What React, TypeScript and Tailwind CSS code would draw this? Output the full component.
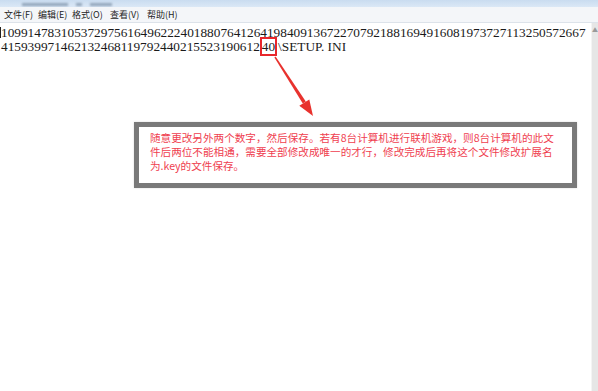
import React from "react";

const menus = [
  { label: "文件(F)", w: "w-[34px]" },
  { label: "编辑(E)", w: "w-[34px]" },
  { label: "格式(O)", w: "w-[38px]" },
  { label: "查看(V)", w: "w-[37px]" },
  { label: "帮助(H)", w: "w-[37px]" },
];

export default function App() {
  return (
    <div
      className="relative w-[598px] h-[391px] overflow-hidden bg-white flex flex-col"
      style={{ fontFamily: '"Noto Sans CJK SC", "Noto Sans", sans-serif' }}
    >
      {/* title bar (cut off) */}
      <div className="h-[7px] bg-gradient-to-b from-[#c9dcf0] to-[#dbe8f6] flex items-end pl-[22px] gap-[8px] pb-[1px] overflow-hidden">
        <div className="w-[46px] h-[3px] bg-[#93a6bb] blur-[1px]" />
        <div className="w-[6px] h-[3px] bg-[#93a6bb] blur-[1px]" />
        <div className="w-[22px] h-[3px] bg-[#93a6bb] blur-[1px]" />
      </div>
      {/* menu bar */}
      <div className="h-[16px] bg-[#f4f6f9] border-b border-[#dde3ea] flex items-center pl-[4px] text-[9px] leading-[16px] text-[#1e1e1e]">
        {menus.map((m) => (
          <span key={m.label} className={`${m.w} whitespace-nowrap`}>
            {m.label}
          </span>
        ))}
      </div>
      {/* editor */}
      <div className="flex-1 flex">
        <div
          className="flex-1 pt-[3px] pl-[1px] text-[13.3px] leading-[13.5px] text-[#1a1a1a] whitespace-nowrap overflow-hidden"
          style={{ fontFamily: '"Liberation Serif", "Noto Sans CJK SC", serif' }}
        >
          <div className="relative">
            <span className="absolute left-[-1px] top-[1px] w-[1px] h-[11px] bg-[#222]" />
            1099147831053729756164962224018807641264198409136722707921881694916081973727113250572667
          </div>
          <div>
            415939971462132468119792440215523190612
            <span className="outline outline-2 outline-[#e8262b] ml-[2px]">40</span>
            <span className="ml-[3px]">\SETUP. INI</span>
          </div>
        </div>
        {/* scrollbar */}
        <div className="w-[7px] bg-[#e6e6e6] border-l border-[#f4f4f4] flex flex-col items-center pt-[4px]">
          <span className="text-[6px] leading-[6px] text-[#9a9a9a]">▲</span>
        </div>
      </div>

      {/* annotation arrow */}
      <svg
        className="absolute left-0 top-0 pointer-events-none"
        width="598"
        height="391"
        viewBox="0 0 598 391"
      >
        <polygon points="275.6,56.6 274.4,57.4 302.8,103.6 305.8,101.6" fill="#e8322e" />
        <polygon points="313,116 309.3,99.4 299.3,105.8" fill="#e8322e" />
      </svg>

      {/* annotation box */}
      <div className="absolute left-[134px] top-[122px] w-[443px] h-[66px] border-[5px] border-[#797979] bg-white shadow-[0_0_2px_rgba(0,0,0,0.15)] pl-[11px] pt-[4px] text-[10.6px] leading-[14px] text-[#ef3e4f] whitespace-nowrap">
        <div>随意更改另外两个数字，然后保存。若有8台计算机进行联机游戏，则8台计算机的此文</div>
        <div>件后两位不能相通，需要全部修改成唯一的才行，修改完成后再将这个文件修改扩展名</div>
        <div>为.key的文件保存。</div>
      </div>
    </div>
  );
}
